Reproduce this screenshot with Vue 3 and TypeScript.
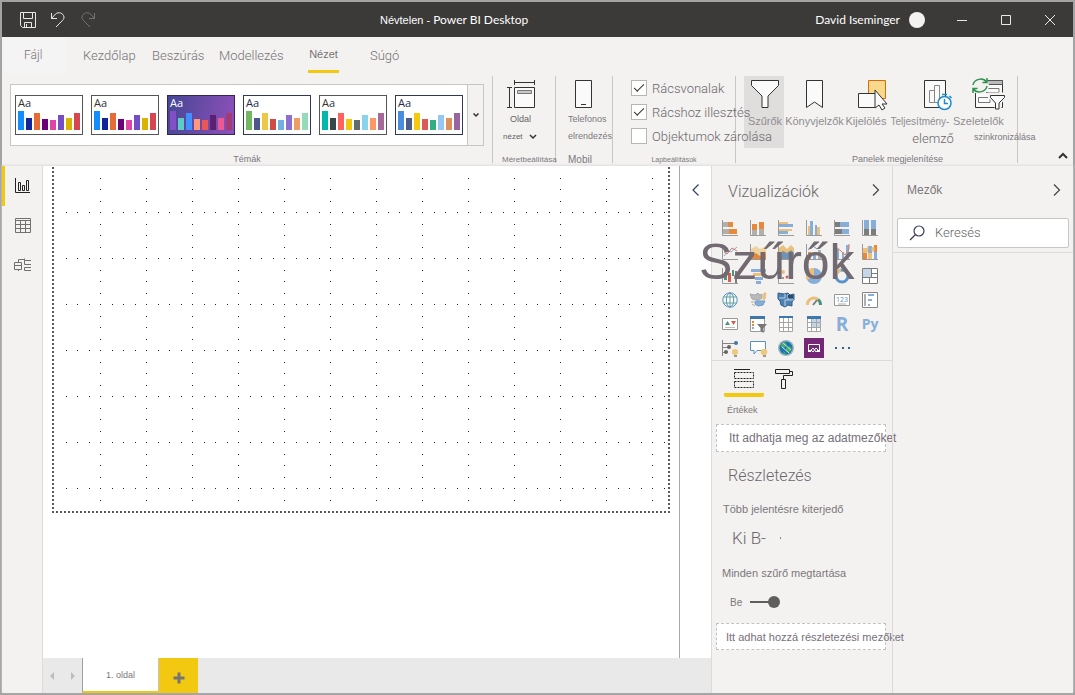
<script setup lang="ts">
import { ref } from 'vue'

const tabs = [
  { name: 'Kezdőlap', cls: 'home' },
  { name: 'Beszúrás', cls: 'insert' },
  { name: 'Modellezés', cls: 'model' },
  { name: 'Nézet', cls: 'view active' },
  { name: 'Súgó', cls: 'help' },
]

const barHeights = [19, 12, 17, 11, 10, 15, 12, 17]
const themes = [
  { cls: 'plain', bars: ['#118dff', '#12239e', '#e66c37', '#6b007b', '#e044a7', '#744ec2', '#d9b300', '#d64550'] },
  { cls: 'plain', bars: ['#118dff', '#12239e', '#e66c37', '#6b007b', '#e044a7', '#744ec2', '#d9b300', '#d64550'] },
  { cls: 'dark', bars: ['#8250c4', '#5ecbc8', '#438fff', '#ff977e', '#eb5757', '#5b2071', '#ec5a96', '#a43b76'] },
  { cls: 'navy', bars: ['#73b761', '#4a588a', '#ecc846', '#cd4c46', '#71afe2', '#8d6fd1', '#ee9e64', '#95dabb'] },
  { cls: 'grey', bars: ['#01b8aa', '#374649', '#fd625e', '#f2c80f', '#5f6b6d', '#8ad4eb', '#fe9666', '#a66999'] },
  { cls: 'navy', bars: ['#4a8ddc', '#4c5d8a', '#f3c911', '#dc5b57', '#33ae81', '#95c8f0', '#dd915f', '#9a64a0'] },
]

const gridlines = ref(true)
const snap = ref(true)
const lock = ref(false)
const keepFilters = ref(true)
const search = ref('')

const O = '#e8883c'
const G = '#b0b0b0'
const B = '#86aed8'
const D = '#7c7c7c'
const Y = '#ecc07a'
const N = '#3f76ac'
const r = (x: number, y: number, w: number, h: number, c: string) =>
  `<rect x="${x}" y="${y}" width="${w}" height="${h}" fill="${c}"/>`
const p = (d: string, stroke: string, fill = 'none', w = 1) =>
  `<path d="${d}" stroke="${stroke}" fill="${fill}" stroke-width="${w}"/>`
const axis = p('M.5 0V15.5H16', '#9a9a9a')

const visuals: { name: string; art: string }[] = [
  { name: 'Halmozott sávdiagram', art: axis + r(1, 2, 5, 5, G) + r(6, 2, 5, 5, O) + r(1, 9, 6, 5, G) + r(7, 9, 8, 5, O) },
  { name: 'Halmozott oszlopdiagram', art: axis + r(2, 10, 5, 5, G) + r(2, 4, 5, 6, O) + r(9, 9, 5, 6, G) + r(9, 2, 5, 7, O) },
  { name: 'Csoportosított sávdiagram', art: axis + r(1, 2, 9, 2, Y) + r(1, 4, 14, 3, B) + r(1, 9, 13, 2, Y) + r(1, 11, 9, 3, B) },
  { name: 'Csoportosított oszlopdiagram', art: axis + r(2, 6, 2, 9, Y) + r(4, 1, 3, 14, B) + r(9, 5, 2, 10, B) + r(11, 7, 3, 8, Y) },
  { name: 'Arányosan halmozott sáv', art: axis + r(1, 2, 5, 5, D) + r(6, 2, 9, 5, B) + r(1, 9, 7, 5, D) + r(8, 9, 7, 5, B) },
  { name: 'Arányosan halmozott oszlop', art: axis + r(2, 0, 5, 9, B) + r(2, 9, 5, 6, D) + r(9, 0, 5, 9, B) + r(9, 9, 5, 6, D) },
  { name: 'Vonaldiagram', art: axis + p('M2 12L6 7L9 8L15 3', B) + p('M2 8L5 10L10 4L15 7', '#dc786c') },
  { name: 'Területdiagram', art: axis + p('M1 5L6 2L10 5L16 2V15H1Z', 'none', '#efd2a2') + p('M1 11L6 9L10 12L16 8V15H1Z', 'none', O) },
  { name: 'Halmozott terület', art: axis + p('M1 4L5 1L9 5L13 1L16 4V12H1Z', 'none', Y) + p('M1 10L5 7L9 9L13 6L16 9V15H1Z', 'none', '#6f94b9') },
  { name: 'Vonal és halmozott oszlop', art: axis + r(2, 8, 3, 7, O) + r(7, 10, 3, 5, B) + r(12, 6, 3, 9, G) + p('M2 6L7 2L11 5L15 2', '#6b9aca') },
  { name: 'Vonal és csoportosított oszlop', art: axis + r(3, 5, 2, 10, B) + r(8, 8, 2, 7, B) + r(12, 1, 3, 14, B) + p('M2 3L7 7L11 11L15 5V0', '#db7c5b') },
  { name: 'Szalagdiagram', art: axis + r(1, 4, 4, 5, Y) + r(1, 9, 4, 6, O) + r(6, 2, 4, 7, B) + r(6, 9, 4, 6, Y) + r(12, 1, 3, 7, O) + r(12, 8, 3, 7, B) + p('M5 5L6 3V6L5 8ZM10 4L12 3V7L10 7Z', Y, Y) },
  { name: 'Vízesésdiagram', art: axis + r(2, 4, 3, 8, '#4b957c') + r(6, 5, 3, 9, '#d55d4d') + r(10, 2, 2, 6, '#4b957c') + r(13, 3, 2, 12, D) },
  { name: 'Tölcsérdiagram', art: r(1, 1, 15, 3, B) + r(3, 5, 11, 3, Y) + r(5, 9, 8, 3, B) + r(6, 13, 5, 3, B) },
  { name: 'Pontdiagram', art: axis + '<circle cx="5" cy="4" r="2" fill="#ecc07a"/><circle cx="5" cy="10" r="1" fill="#7c7c7c"/><circle cx="13" cy="9" r="2" fill="#86aed8"/><circle cx="9" cy="9" r="1.5" fill="#d55d4d"/>' },
  { name: 'Kördiagram', art: '<circle cx="8" cy="8" r="8" fill="#86aed8"/><path d="M8 8V0A8 8 0 0 0 1 12Z" fill="#ecc07a"/>' },
  { name: 'Fánkdiagram', art: '<circle cx="8" cy="8" r="6" fill="none" stroke="#5b93ca" stroke-width="3"/><path d="M2 8A6 6 0 0 1 7 2" fill="none" stroke="#ecc07a" stroke-width="3"/>' },
  { name: 'Fatérkép', art: r(1, 1, 15, 15, '#fff') + r(1, 1, 9, 8, '#c5d6e8') + p('M.5 .5H15.5V15.5H.5ZM.5 9.5H15.5M9.5 .5V9.5M9.5 5.5H15.5M7.5 9.5V15.5', D) },
  { name: 'Térkép', art: '<circle cx="8" cy="8" r="7.2" fill="#f7fbfc" stroke="#5a91bd"/>' + p('M1 5H15M1 11H15M8 1V15', '#68a58e') + '<ellipse cx="8" cy="8" rx="3.7" ry="7" fill="none" stroke="#5a91bd"/>' },
  { name: 'Kartogram', art: p('M0 2L5 3L8 1L10 3L12 2V6L9 8H5L2 7Z', '#aaa', '#b8b8b8') + p('M6 9H15L13 13L8 14L5 12Z', '#6f99c7', B) + p('M1 10H5M2 12L5 14', '#aaa') + p('M14 1H16L15 7L13 8Z', Y, Y) },
  { name: 'Alakzattérkép', art: p('M0 1L6 2L10 1L12 3L16 2L16 8L14 10V14L10 13L7 15L3 13L2 9L0 7Z', '#355d84', '#4e81b3') + p('M1 6H7V2M7 8H16M7 8V14M10 2V8', '#bdd2e4') + r(10, 3, 5, 3, '#304a64') },
  { name: 'Mérőműszer', art: p('M1.5 13A6.5 6.5 0 0 1 12 7.5', Y, 'none', 3) + p('M12 7.5A6.5 6.5 0 0 1 14.5 13', '#4b957c', 'none', 3) + p('M7 13L11 8', D, 'none', 2) },
  { name: 'Kártya', art: r(0, 2, 16, 12, '#fff') + p('M.5 2.5H15.5V13.5H.5Z', '#999') + '<text x="8" y="10" text-anchor="middle" font-size="7" font-family="Open Sans, sans-serif" fill="#5a91bd">123</text>' + p('M4 12H12', '#aaa') },
  { name: 'Többsoros kártya', art: r(0, 0, 16, 16, '#fff') + p('M.5 .5H15.5V15.5H.5Z', '#858585') + r(2, 2, 2, 12, G) + p('M6 3H12M6 8H10M6 13H8', B, 'none', 2) },
  { name: 'KPI', art: r(0, 2, 16, 12, '#fff') + p('M.5 2.5H15.5V13.5H.5Z', '#999') + p('M3 9L5.5 5L8 9Z', 'none', '#4b957c') + p('M9 5H14L11.5 9Z', 'none', '#d55d4d') + p('M3 11.5H13', '#bbb') },
  { name: 'Szeletelő', art: r(0, 0, 15, 15, '#fff') + p('M.5 .5H14.5V15.5H.5Z', '#9b9b9b') + r(0, 0, 15, 3, N) + r(2, 5, 2, 2, O) + r(2, 8, 2, 2, O) + r(2, 11, 2, 2, B) + p('M7 8H17L13.5 12V17L10.5 15V12Z', 'none', '#777') },
  { name: 'Táblázat', art: r(1, 1, 14, 14, '#fff') + p('M1.5 .5H14.5V15.5H1.5ZM5.5 1V15M10.5 1V15M1.5 6.5H14.500M1.5 11.5H14.5', '#a5a5a5') + r(1, 0, 14, 2, N) },
  { name: 'Mátrix', art: r(1, 1, 14, 14, '#fff') + r(5, 3, 9, 8, '#c3d5e8') + p('M1.5 .5H14.5V15.5H1.5ZM5.5 1V15M10.5 1V15M1.5 6.5H14.5M1.5 11.5H14.5', '#a5a5a5') + r(1, 0, 14, 3, N) },
  { name: 'R', art: '<text x="8" y="15" text-anchor="middle" font-size="19" font-weight="700" font-family="Open Sans, sans-serif" fill="#86aed8">R</text>' },
  { name: 'Python', art: '<text x="8" y="13" text-anchor="middle" font-size="14" font-weight="700" font-family="Open Sans, sans-serif" fill="#86aed8">Py</text>' },
  { name: 'Fő befolyásolók', art: p('M.5 0V16M1 3.5H14M1 7.5H8M1 12.5H4', '#858585') + '<circle cx="14" cy="3" r="2" fill="#3f76ac"/><circle cx="7" cy="7" r="2" fill="#666"/><circle cx="4" cy="12" r="2" fill="#666"/><circle cx="13" cy="12" r="3" fill="#ecc97b"/>' + r(12, 15, 3, 2, '#999') },
  { name: 'Kérdések és válaszok', art: p('M.5 1.5H15.5V10.5H7L4 14V10.5H.5Z', '#5a91bd', '#fff') + '<circle cx="14" cy="12" r="3.3" fill="#ecc97b"/>' + r(13, 15, 3, 2, '#999') },
  { name: 'ArcGIS', art: '<circle cx="8" cy="8" r="8" fill="#9db4bc"/><circle cx="8" cy="8" r="6.5" fill="#1674af"/>' + p('M3 4L7 2L9 5L6 8L3 7ZM8 8L12 6L14 9L11 13L8 11ZM5 11L8 13L6 14Z', 'none', '#49ab65') + p('M5 3L13 10M4 7L11 13', '#cfe6ea') },
  { name: 'Power Apps', art: r(-2, -2, 20, 20, '#742774') + p('M2.5 11V4.5H13.5V11', '#fff') + p('M2 11H5M11 11H14', '#fff', 'none', 2) + p('M5 10L7 8L10 12L12 10L10 8L7 12Z', '#fff', 'none', 1) },
  { name: 'További vizualizációk', art: r(1, 7, 2, 2, '#2d6494') + r(8, 7, 2, 2, '#2d6494') + r(14, 7, 2, 2, '#2d6494') },
]
</script>

<template>
  <div class="window">
    <header class="titlebar">
      <div class="quick">
        <button aria-label="Mentés"><svg width="16" height="16" viewBox="0 0 16 16"><path d="M.5.5h15v15h-13l-2-2zM3.500.5v6h9v-6M4.500 15.500v-5h7v5M6.500 12v3.500" /></svg></button>
        <button aria-label="Visszavonás"><svg width="16" height="16" viewBox="0 0 16 16"><path d="M1.500 1v5.500H7M1.500 6.500l4-4.500c3-2.500 8-1 8.500 3 0 2-1 3-2 4l-6 6" /></svg></button>
        <button class="dim" aria-label="Mégis"><svg width="16" height="16" viewBox="0 0 16 16"><path d="M14.500 1v5.500H9M14.500 6.500l-4-4.500c-3-2.500-8-1-8.500 3 0 2 1 3 2 4l6 6" /></svg></button>
      </div>
      <div class="title"><span class="doc">Névtelen -</span> Power BI Desktop</div>
      <div class="account"><span>David Iseminger</span><i class="avatar"></i></div>
      <div class="controls">
        <button aria-label="Kis méret"><svg width="12" height="12" viewBox="0 0 12 12"><path d="M1 6.500h10" /></svg></button>
        <button aria-label="Teljes méret"><svg width="12" height="12" viewBox="0 0 12 12"><path d="M1.500 1.500h9v9h-9z" /></svg></button>
        <button aria-label="Bezárás"><svg width="12" height="12" viewBox="0 0 12 12"><path d="M1 1l10 10M11 1L1 11" /></svg></button>
      </div>
    </header>

    <nav class="tabs">
      <button class="file">Fájl</button>
      <button v-for="t in tabs" :key="t.name" :class="t.cls">{{ t.name }}</button>
    </nav>

    <section class="ribbon">
      <div class="group g-themes">
        <div class="gallery">
          <div class="thumbs">
            <button v-for="(t, i) in themes" :key="i" class="theme" :class="t.cls">
              <span>Aa</span>
              <span class="bars"><i v-for="(c, j) in t.bars" :key="j" :style="{ height: barHeights[j] + 'px', background: c }"></i></span>
            </button>
          </div>
          <button class="more" aria-label="További témák"><svg width="6" height="4" viewBox="0 0 6 4"><path d="M.5.5L3 3 5.500.5" fill="none" stroke="#333" stroke-width="1.500" /></svg></button>
        </div>
        <div class="caption">Témák</div>
      </div>

      <div class="group g-page">
        <button class="big">
          <svg width="30" height="30" viewBox="0 0 30 30"><g fill="none" stroke="#333"><path d="M8.500 0v5M28.500 0v5M8.500 2.500h20M1 7.500h5M1 27.500h5M3.500 7.500v20" /><path d="M8.500 7.500h20v20h-20z" fill="#fafafa" /><path d="M11.500 10.500h14v3h-14z" fill="#c8c8c4" stroke="#777" /></g></svg>
          <span>Oldal</span>
          <span class="second">nézet <svg width="8" height="5" viewBox="0 0 8 5"><path d="M1 1l3 3 3-3" fill="none" stroke="#333" stroke-width="1.500" /></svg></span>
        </button>
        <div class="caption">Méretbeállítása</div>
      </div>

      <div class="group g-mobile">
        <button class="big">
          <svg width="18" height="30" viewBox="0 0 18 30"><path d="M.5.5h16v27H.5z" fill="#fafafa" stroke="#333" /><path d="M6 24.500h5" stroke="#333" /></svg>
          <span>Telefonos</span>
          <span class="second">elrendezés</span>
        </button>
        <div class="caption">Mobil</div>
      </div>

      <div class="group g-options">
        <div class="checks">
          <label><input v-model="gridlines" type="checkbox" />Rácsvonalak</label>
          <label><input v-model="snap" type="checkbox" />Rácshoz illesztés</label>
          <label><input v-model="lock" type="checkbox" />Objektumok zárolása</label>
        </div>
        <div class="caption">Lapbeállítások</div>
      </div>

      <div class="group g-panes">
        <div class="panes">
          <button class="pane p-filter">
            <svg width="28" height="30" viewBox="0 0 28 30"><path d="M.5.5h27v5L17 16v11.500h-6V16L.5 5.500z" fill="#fafafa" stroke="#333" /></svg>
            <span>Szűrők</span>
          </button>
          <button class="pane p-bookmark">
            <svg width="18" height="30" viewBox="0 0 18 30"><path d="M.5.5h16v27l-8-5.500-8 5.500z" fill="#fafafa" stroke="#333" /></svg>
            <span>Könyvjelzők</span>
          </button>
          <button class="pane p-select">
            <svg width="30" height="30" viewBox="0 0 30 30"><path d="M10.500.5h17v18h-17z" fill="#f8d98c" stroke="#d96b0b" /><path d="M.5 13.500h17v14H.5z" fill="#fafafa" stroke="#333" /><path d="M17 10v18l4-3 3 5 3-2-3-4h5z" fill="#fafafa" stroke="#333" /></svg>
            <span>Kijelölés</span>
          </button>
          <button class="pane p-perf">
            <svg width="28" height="30" viewBox="0 0 28 30"><path d="M.5.5h21v27H.5z" fill="#fafafa" stroke="#333" /><path d="M5.500 22.500v-12h5v12zM10.500 22.500V5.500h5v17z" fill="none" stroke="#888" /><circle cx="20.500" cy="23" r="6.500" fill="#fff" stroke="#1f8ad0" stroke-width="1.500" /><path d="M20.500 19v4.500H24M18 14.500h5M25.500 16l2 2" fill="none" stroke="#1f8ad0" stroke-width="1.500" /></svg>
            <span>Teljesítmény-</span>
            <span class="second">elemző</span>
          </button>
          <button class="pane p-slicer">
            <svg width="34" height="32" viewBox="0 0 34 32"><path d="M4.500 2.500h27v27h-27z" fill="#fafafa" stroke="#333" /><path d="M15 2.500h16.500v4H15z" fill="#bbb" stroke="#555" /><path d="M15 10.500h13v4H15M7.500 19.500H19v5H7.500z" fill="none" stroke="#777" /><path d="M18.500 16h16v3l-5.500 5.500V33h-4v-8.500L18.500 19z" fill="#f3f2f1" stroke="#f3f2f1" stroke-width="3" /><path d="M19.500 17.500h14v2L28 25v6h-3.500v-6l-5-5.500z" fill="#fafafa" stroke="#333" /><circle cx="9" cy="7.500" r="9" fill="#f3f2f1" /><path d="M2 7c1-6 10-8 13.500-3M16 0v4.500h-4.500M16 8c-1 6-10 8-13.500 3M2 15v-4.500h4.500" fill="none" stroke="#2f9150" stroke-width="1.500" /></svg>
            <span>Szeletelők</span>
            <span class="second">szinkronizálása</span>
          </button>
        </div>
        <div class="caption">Panelek megjelenítése</div>
      </div>
      <button class="collapse" aria-label="Menüszalag összecsukása"><svg width="10" height="6" viewBox="0 0 10 6"><path d="M1 5l4-4 4 4" fill="none" stroke="#333" stroke-width="2" /></svg></button>
    </section>

    <div class="body">
      <nav class="views">
        <button class="on" aria-label="Jelentés"><svg width="16" height="16" viewBox="0 0 16 16"><path d="M.5 0v14.500H15M3.500 4.500h2v8h-2zM7.500 7.500h2v5h-2zM11.500 2.500h2v10h-2z" fill="none" stroke="#222" /></svg></button>
        <button aria-label="Adatok"><svg width="16" height="16" viewBox="0 0 16 16"><path d="M.5.5h15v14H.5zM.5 2.500h15M.5 6.500h15M.5 10.500h15M5.500 2.500v12M10.500 2.500v12" fill="none" stroke="#707070" /></svg></button>
        <button aria-label="Modell"><svg width="18" height="16" viewBox="0 0 18 16"><path d="M.5 4.500h7v7h-7zM.5 7.500h7M4.500 13v-1.500M4.500 4.500v-3h6M17 2.500h-6.500v-2M10.500 2.500v4H17M17 9.500h-6.500v3H17" fill="none" stroke="#707070" /></svg></button>
      </nav>

      <main class="main">
        <div class="workspace">
          <div class="canvas">
            <div class="page">
              <svg class="grid" aria-hidden="true">
                <defs>
                  <pattern id="dots" x="36" y="36" width="46" height="46" patternUnits="userSpaceOnUse">
                    <path d="M0 0h1v1H0zM12 0h1v1h-1zM23 0h1v1h-1zM35 0h1v1h-1zM0 12h1v1H0zM0 23h1v1H0zM0 35h1v1H0z" fill="#222" />
                  </pattern>
                </defs>
                <rect width="100%" height="100%" fill="url(#dots)" />
              </svg>
            </div>
          </div>
          <aside class="filters">
            <button aria-label="Szűrők kibontása"><svg width="8" height="12" viewBox="0 0 8 12"><path d="M6.500.5L1 6l5.500 5.500" fill="none" stroke="#333f66" stroke-width="1.200" /></svg></button>
            <h2>Szűrők</h2>
          </aside>
        </div>
        <footer class="pagebar">
          <button class="step" aria-label="Előző oldal"><svg width="4" height="8" viewBox="0 0 4 8"><path d="M4 0v8L0 4z" fill="#bdbdbd" /></svg></button>
          <button class="step" aria-label="Következő oldal"><svg width="4" height="8" viewBox="0 0 4 8"><path d="M0 0v8l4-4z" fill="#bdbdbd" /></svg></button>
          <button class="sheet">1. oldal</button>
          <button class="add" aria-label="Új oldal"><svg width="12" height="12" viewBox="0 0 12 12"><path d="M6 .5v11M.5 6h11" stroke="#757575" stroke-width="3" /></svg></button>
        </footer>
      </main>

      <aside class="viz">
        <div class="head">
          <h2>Vizualizációk</h2>
          <button aria-label="Összecsukás"><svg width="8" height="12" viewBox="0 0 8 12"><path d="M1 .5L6.500 6 1 11.500" fill="none" stroke="#444" stroke-width="1.200" /></svg></button>
        </div>
        <div class="visuals">
          <button v-for="v in visuals" :key="v.name" :aria-label="v.name">
            <svg width="16" height="16" viewBox="0 0 16 16" v-html="v.art"></svg>
          </button>
        </div>
        <div class="modes">
          <button class="on" aria-label="Mezők"><svg width="20" height="20" viewBox="0 0 20 20"><path d="M0 .5h16" stroke="#222" /><path d="M.5 3.500h19v6H.5zM.5 12.500h19v6H.5z" fill="none" stroke="#222" stroke-dasharray="2 1" /></svg></button>
          <button aria-label="Formátum"><svg width="18" height="20" viewBox="0 0 18 20"><path d="M.5.5h14v4H.5zM14.500 2.500h3v4h-9v4M6.500 10.500h4v9h-4z" fill="none" stroke="#222" /></svg></button>
        </div>
        <div class="values">Értékek</div>
        <div class="drop"><span>Itt adhatja meg az adatmezőket</span></div>
        <h3>Részletezés</h3>
        <div class="cross">Több jelentésre kiterjedő</div>
        <div class="off">Ki B- <i></i></div>
        <div class="keep">Minden szűrő megtartása</div>
        <label class="switch">Be<input v-model="keepFilters" type="checkbox" role="switch" /></label>
        <div class="drop low"><span>Itt adhat hozzá részletezési mezőket</span></div>
      </aside>

      <aside class="fields">
        <div class="head">
          <h2>Mezők</h2>
          <button aria-label="Összecsukás"><svg width="8" height="12" viewBox="0 0 8 12"><path d="M1 .5L6.500 6 1 11.500" fill="none" stroke="#444" stroke-width="1.200" /></svg></button>
        </div>
        <label class="search">
          <svg width="16" height="16" viewBox="0 0 16 16"><circle cx="10" cy="6" r="5" fill="none" stroke="#3a3f58" stroke-width="1.200" /><path d="M6.500 9.500L1 15" stroke="#4a3348" stroke-width="1.200" /></svg>
          <input v-model="search" type="text" placeholder="Keresés" aria-label="Keresés" />
        </label>
      </aside>
    </div>
  </div>
</template>

<style>
body { margin: 0; }
</style>

<style scoped>
* { box-sizing: border-box; }
button { margin: 0; padding: 0; border: 0; background: none; font: inherit; color: inherit; }
h2, h3 { margin: 0; font-weight: 400; }
svg { display: block; flex: none; overflow: visible; }
.window {
  display: flex; flex-direction: column; min-height: 100vh;
  border: 2px solid #a3a3a3; background: #f3f2f1; color: #7b787b;
  font-family: "Liberation Sans", Arial, sans-serif; font-size: 12px; white-space: nowrap;
}

.titlebar {
  display: flex; align-items: center; height: 35px; padding-left: 18px;
  background: #3b3a38; color: #fff; font-family: Lato, "Open Sans", sans-serif;
}
.titlebar svg { fill: none; stroke: #e8e8e8; }
.quick { display: flex; gap: 14px; }
.quick .dim svg { stroke: #737270; }
.title { flex: 1; padding-left: 284px; }
.doc { font-family: "Liberation Sans", Arial, sans-serif; font-size: 11px; }
.account { display: flex; align-items: center; gap: 9px; }
.avatar { width: 16px; height: 16px; border-radius: 50%; background: #f3f2f1; }
.controls { display: flex; margin: 0 1px 0 15px; }
.controls button { display: flex; justify-content: center; width: 44px; }

.tabs { display: flex; height: 37px; color: #757275; }
.tabs button { height: 36px; text-align: left; font-family: Roboto, sans-serif; font-weight: 300; font-size: 13px; }
.tabs .file { width: 64px; padding-left: 22px; margin-right: 17px; background: #f5f4f4; font-size: 12px; }
.tabs .home { width: 69px; }
.tabs .insert { width: 67px; }
.tabs .model { width: 89px; }
.tabs .view { width: 31px; margin-right: 31px; font-family: inherit; font-weight: 400; font-size: 11px; border-bottom: 3px solid #f2c811; text-align: center; }

.ribbon { display: flex; height: 92px; padding: 2px 0 3px; }
.group { display: flex; flex-direction: column; flex: none; border-right: 1px solid #c8c6c4; }
.caption { margin-top: auto; height: 7px; line-height: 7px; font-size: 9px; text-align: center; }
.g-themes { width: 491px; padding: 8px 8px 0; }
.gallery { display: flex; justify-content: space-between; height: 62px; padding-left: 4px; background: #fff; border: 1px solid #c8c6c4; }
.thumbs { display: flex; align-items: center; gap: 8px; }
.theme {
  display: flex; flex-direction: column; justify-content: space-between; flex: none; width: 68px; height: 40px; padding: 0 2px 4px;
  border: 1px solid #555; background: #fff; color: #333; font-family: "Open Sans", sans-serif; font-size: 11px; line-height: 14px; text-align: left;
}
.theme.navy { border-color: #30385a; color: #252c48; }
.theme.dark { border-color: #33265a; background: linear-gradient(100deg, #454794, #8e50ba); color: #fff; }
.bars { display: flex; align-items: flex-end; gap: 2px; }
.bars i { width: 6px; }
.more { display: flex; align-items: center; justify-content: center; width: 16px; border-left: 1px solid #c8c6c4; background: #f3f2f1; }
.big { display: flex; flex-direction: column; padding-top: 4px; font-size: 9px; line-height: 17px; text-align: left; }
.big svg { margin-bottom: 1px; }
.g-page { width: 63px; }
.g-page .big { padding-left: 13px; }
.g-page .big > span { padding-left: 4px; color: #656265; }
.g-page .big > .second { display: flex; align-items: center; gap: 6px; margin-left: -3px; padding: 0; font-size: 8px; }
.g-page .caption { padding-left: 9px; font-size: 8px; }
.g-mobile { width: 57px; }
.g-mobile .big { padding-left: 12px; }
.g-mobile .big svg { margin-left: 7px; }
.g-mobile .caption { padding-left: 12px; font-size: 10px; text-align: left; }
.g-options { width: 123px; }
.checks { position: relative; z-index: 1; display: flex; flex-direction: column; gap: 8px; padding: 4px 0 0 18px; color: #6b686b; font-family: Roboto, sans-serif; font-weight: 300; font-size: 13px; }
.checks label { display: flex; align-items: center; gap: 5px; height: 16px; }
.checks input { appearance: none; flex: none; width: 16px; height: 16px; margin: 0; border: 1px solid #b8b6b4; background: #fff; }
.checks input:checked::before { content: ""; display: block; width: 9px; height: 4px; margin: 3px 0 0 2px; border: solid #333; border-width: 0 0 1px 1px; transform: rotate(-45deg); }
.g-options .caption { padding-left: 0; font-size: 7px; }
.g-panes { width: 282px; }
.panes { display: flex; padding-left: 8px; font-size: 11px; color: #908d90; }
.pane { display: flex; flex: none; flex-direction: column; align-items: center; height: 72px; padding-top: 4px; line-height: 17px; }
.pane svg { margin-bottom: 3px; }
.p-filter { width: 40px; padding-left: 2px; background: #dfdedd; }
.p-bookmark { width: 61px; }
.p-select { width: 42px; }
.p-select svg { margin-left: 14px; }
.p-perf { width: 66px; }
.p-perf svg { margin-left: 36px; }
.p-perf > span { font-size: 10px; }
.p-perf .second { margin-left: 26px; font-family: Roboto, sans-serif; font-weight: 300; font-size: 13px; color: #6b686b; }
.p-slicer { width: 64px; align-items: flex-start; }
.p-slicer svg { margin: -2px 0 3px 18px; }
.p-slicer .second { margin-left: 21px; font-size: 9px; line-height: 14px; color: #7b787b; }
.g-panes .caption { padding-left: 42px; }
.collapse { align-self: flex-end; margin: 0 5px 4px auto; }

.body { display: flex; flex: 1; box-shadow: 0 -1px 2px #ddd; }
.views { display: flex; flex-direction: column; width: 41px; border-right: 1px solid #dcdbda; }
.views button { display: flex; align-items: center; justify-content: center; height: 40px; padding-left: 2px; }
.views .on { border-left: 3px solid #f2c811; padding: 0 1px 0 0; }
.main { display: flex; flex-direction: column; flex: 1; min-width: 0; background: #fff; }
.workspace { display: flex; flex: 1; }
.canvas { flex: 1; padding: 0 9px; border-right: 1px solid #a8a8a8; }
.page {
  height: 347px; padding: 10px 2px 11px 12px;
  background:
    repeating-linear-gradient(#5a5a5a 0 2px, transparent 2px 4px) 0 1px / 2px 100% no-repeat,
    repeating-linear-gradient(#5a5a5a 0 2px, transparent 2px 4px) 100% 1px / 2px 100% no-repeat,
    repeating-linear-gradient(90deg, #5a5a5a 0 2px, transparent 2px 4px) 0 100% / 100% 2px no-repeat;
}
.grid { width: 100%; height: 100%; overflow: hidden; }
.filters { position: relative; width: 31px; padding-top: 18px; }
.filters button { display: block; padding-left: 12px; }
.filters h2 { position: absolute; z-index: 2; top: 67px; left: 19px; font-size: 50px; line-height: 58px; color: #716a70; }
.pagebar { display: flex; height: 35px; background: #e9e9e9; }
.step { display: flex; align-items: center; justify-content: center; width: 17px; }
.step + .step { width: 22px; padding-left: 4px; }
.sheet { width: 77px; border-left: 1px solid #a0a0a0; border-right: 1px solid #c5c5c5; border-bottom: 2px solid #f2c811; background: #fff; font-size: 9px; }
.add { display: flex; align-items: center; justify-content: center; width: 39px; padding-top: 4px; background: #f2c811; }

.viz, .fields { width: 181px; border-left: 1px solid #dcdbda; }
.head { display: flex; align-items: center; justify-content: space-between; height: 50px; padding: 0 12px 0 16px; }
.viz .head h2 { color: #6b686b; font-family: Roboto, sans-serif; font-weight: 300; font-size: 16px; }
.viz .head button { padding-bottom: 2px; }
.visuals { display: grid; grid-template-columns: repeat(6, 28px); grid-auto-rows: 24px; padding-left: 4px; }
.visuals button { display: flex; align-items: center; justify-content: center; }
.modes { display: flex; height: 37px; padding-left: 12px; border-top: 1px solid #dcdbda; }
.modes button { display: flex; justify-content: center; width: 40px; padding-top: 8px; }
.modes .on { border-bottom: 4px solid #f2c811; border-radius: 2px; }
.values { height: 27px; padding-left: 15px; line-height: 27px; font-size: 9px; }
.drop { display: flex; align-items: center; height: 28px; margin: 0 6px 0 4px; padding-left: 12px; border: 1px dashed #c4c2c0; background: #fff; color: #77707a; }
.drop.low { height: 27px; padding-left: 9px; font-size: 11px; }
h3 { height: 48px; padding-left: 16px; line-height: 48px; color: #6b686b; font-family: Roboto, sans-serif; font-weight: 300; font-size: 16px; }
.cross { height: 18px; padding-left: 11px; line-height: 18px; font-size: 11px; }
.off { display: flex; align-items: center; gap: 14px; height: 40px; padding-left: 20px; color: #6b686b; font-family: Roboto, sans-serif; font-weight: 300; font-size: 17px; }
.off i { width: 1px; height: 2px; background: #888; }
.keep { height: 30px; padding-left: 10px; line-height: 30px; font-size: 11px; }
.switch { display: flex; align-items: center; gap: 8px; height: 28px; margin-bottom: 7px; padding-left: 18px; font-size: 10px; }
.switch input { appearance: none; display: flex; align-items: center; width: 30px; height: 12px; margin: 0; background: linear-gradient(#605e5c, #605e5c) 0 50% / 24px 2px no-repeat; }
.switch input::before { content: ""; width: 12px; height: 12px; border-radius: 50%; background: #605e5c; }
.switch input:checked::before { margin-left: auto; }

.fields .head { height: 52px; padding: 0 12px 5px 14px; }
.fields .head h2 { font-size: 12px; }
.search { display: flex; align-items: center; gap: 10px; height: 30px; margin: 0 4px; padding-left: 11px; border: 1px solid #c8c6c4; border-radius: 2px; background: #fff; }
.search input { flex: 1; min-width: 0; padding: 0 0 1px; border: 0; outline: 0; background: none; font-family: Roboto, sans-serif; font-weight: 300; font-size: 13px; }
.search input::placeholder { color: #67646a; opacity: 1; }
.fields::after { content: ""; display: block; margin-top: 4px; border-top: 1px solid #dcdbda; }
</style>
